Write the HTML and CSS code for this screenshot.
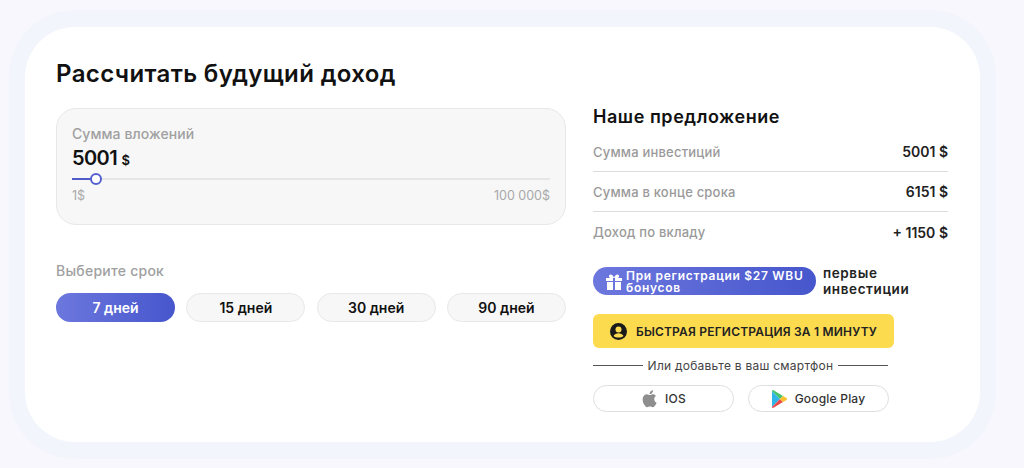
FILE: index.html
```html
<!DOCTYPE html>
<html lang="ru">
  <head>
    <meta charset="UTF-8" />
    <title>Рассчитать будущий доход</title>
    <link rel="stylesheet" href="styles.css">
  </head>
  <body>
    <div class="halo">
      <main class="card">
        <h1>Рассчитать будущий доход</h1>
        <div class="columns">
          <section class="calc">
            <div class="amount-box">
              <div class="amount-label">Сумма вложений</div>
              <div class="amount-value">5001 <span>$</span></div>
              <div class="slider"><div class="slider-fill"></div><div class="slider-knob"></div></div>
              <div class="slider-limits"><span>1$</span><span>100 000$</span></div>
            </div>
            <div class="term-label">Выберите срок</div>
            <div class="terms">
              <button class="term active">7 дней</button>
              <button class="term">15 дней</button>
              <button class="term">30 дней</button>
              <button class="term">90 дней</button>
            </div>
          </section>
          <section class="offer">
            <h2>Наше предложение</h2>
            <div class="row"><span>Сумма инвестиций</span><b>5001 $</b></div>
            <div class="row"><span>Сумма в конце срока</span><b>6151 $</b></div>
            <div class="row last"><span>Доход по вкладу</span><b>+ 1150 $</b></div>
            <div class="bonus">
              <div class="bonus-pill">
                <svg width="18" height="18" viewBox="0 0 18 18"><path fill="#fff" d="M1 5h7v3H1zM10 5h7v3h-7zM2 9h6v8H2zM10 9h6v8h-6zM5.500 1.500c1.500 0 3 1.500 3.500 3.500H5.500C3.500 5 3.500 1.500 5.500 1.500zM12.500 1.500c2 0 2 3.500 0 3.500H9c.5-2 2-3.500 3.500-3.500z"/></svg>
                <span>При регистрации $27 WBU бонусов</span>
              </div>
              <div class="bonus-text">первые инвестиции</div>
            </div>
            <button class="register">
              <svg width="17" height="17" viewBox="0 0 17 17"><circle cx="8.500" cy="8.500" r="8.500" fill="#1a1a1a"/><circle cx="8.500" cy="6.500" r="3" fill="#fddb4f"/><path fill="#fddb4f" d="M3.500 13c1-2 3-2.800 5-2.800s4 .8 5 2.800c-1.300 1-3 1.600-5 1.600s-3.700-.6-5-1.600z"/></svg>
              БЫСТРАЯ РЕГИСТРАЦИЯ ЗА 1 МИНУТУ
            </button>
            <div class="divider"><i></i><span>Или добавьте в ваш смартфон</span><i></i></div>
            <div class="stores">
              <button class="store">
                <svg width="16" height="19" viewBox="0 0 16 19"><path fill="#8e8e8e" d="M13.200 10c0-2 1.600-3 1.700-3.100-1-1.400-2.400-1.600-3-1.600-1.300-.1-2.500.8-3.100.8-.7 0-1.700-.8-2.800-.8C4.500 5.300 3.200 6.100 2.400 7.400.9 10 2 13.900 3.500 16c.7 1 1.600 2.200 2.700 2.200 1.100-.1 1.500-.7 2.800-.7s1.700.7 2.800.7c1.200 0 1.900-1 2.600-2.100.8-1.200 1.200-2.300 1.200-2.400-.1 0-2.400-.9-2.400-3.700zM11.100 3.900c.6-.7 1-1.700.9-2.700-.9 0-1.900.6-2.500 1.300-.5.600-1 1.600-.9 2.600 1 .1 1.900-.5 2.500-1.200z"/></svg>
                IOS
              </button>
              <button class="store">
                <svg width="15" height="18" viewBox="0 0 15 18"><path fill="#2fb5e8" d="M0 1v16l8-8z"/><path fill="#45c46b" d="M0 1l8 8 3-3L1.500.3C.8-.1.200.2 0 1z"/><path fill="#ea4b4b" d="M0 17l8-8 3 3-9.500 5.700c-.7.400-1.300.1-1.500-.7z"/><path fill="#fbc02d" d="M11 6l3.500 2.100c.7.500.7 1.300 0 1.800L11 12 8 9z"/></svg>
                Google Play
              </button>
            </div>
          </section>
        </div>
      </main>
    </div>
  </body>
</html>
```

FILE: styles.css
```css
* {
  box-sizing: border-box;
}
body {
  margin: 0;
  height: 468px;
  overflow: hidden;
  background: #f7f7fd;
  font-family: Inter, "Noto Sans", sans-serif;
  color: #111;
}
button {
  font-family: inherit;
  cursor: pointer;
}
.halo {
  margin: 10px 28px 0 9px;
  height: 449px;
  padding: 17px 16px 17px 16px;
  background: #f2f5fb;
  border-radius: 66px;
}
.card {
  height: 415px;
  padding: 32px 31px 0 31px;
  background: #fff;
  border-radius: 50px;
}
h1 {
  margin: 0;
  font-size: 24px;
  line-height: 30px;
  font-weight: 600;
  letter-spacing: 0.38px;
}
.columns {
  display: flex;
  justify-content: space-between;
  margin-top: 19px;
}
.calc {
  width: 510px;
}
.amount-box {
  height: 117px;
  padding: 16px 15px 0 15px;
  background: #f7f7f8;
  border: 1px solid #e8e8ea;
  border-radius: 20px;
}
.amount-label {
  font-size: 14px;
  line-height: 17px;
  font-weight: 500;
  color: #a0a0a0;
  letter-spacing: 0.08px;
}
.amount-value {
  margin-top: 3px;
  font-size: 20px;
  line-height: 26px;
  font-weight: 600;
  letter-spacing: -0.6px;
}
.amount-value span {
  font-size: 13px;
}
.slider {
  position: relative;
  height: 2px;
  margin-top: 5px;
  background: #e6e6e8;
}
.slider-fill {
  width: 20px;
  height: 2px;
  background: #4f5bc9;
}
.slider-knob {
  position: absolute;
  left: 18px;
  top: -5px;
  width: 12px;
  height: 12px;
  background: #fff;
  border: 2.500px solid #5560d0;
  border-radius: 50%;
}
.slider-limits {
  display: flex;
  justify-content: space-between;
  margin-top: 7px;
  font-size: 12.500px;
  line-height: 17px;
  color: #a8a8a8;
}
.term-label {
  margin-top: 37px;
  font-size: 14px;
  line-height: 17px;
  font-weight: 500;
  color: #a0a0a0;
  letter-spacing: 0.25px;
}
.terms {
  display: flex;
  justify-content: space-between;
  margin-top: 14px;
}
.term {
  width: 119px;
  height: 29px;
  padding: 0;
  font-size: 14px;
  font-weight: 600;
  color: #111;
  background: #f7f7f8;
  border: 1px solid #e8e8ea;
  border-radius: 15px;
}
.term.active {
  color: #fff;
  border: none;
  background: linear-gradient(90deg, #6d78de, #4656cc);
}
.offer {
  width: 356px;
}
h2 {
  margin: 0;
  font-size: 18px;
  line-height: 18px;
  font-weight: 600;
  letter-spacing: 0.55px;
}
.row {
  display: flex;
  justify-content: space-between;
  align-items: center;
  width: 355px;
  height: 40px;
  font-size: 13px;
  border-bottom: 1px solid #dcdcdc;
}
.offer h2 + .row {
  margin-top: 6px;
}
.row span {
  font-weight: 500;
  color: #9a9a9a;
  letter-spacing: 0.2px;
}
.row b {
  font-size: 14px;
  font-weight: 600;
  color: #222;
}
.row.last {
  border-bottom: none;
}
.bonus {
  display: flex;
  align-items: center;
  gap: 7px;
  margin-top: 13px;
}
.bonus-pill {
  display: flex;
  align-items: center;
  gap: 3px;
  width: 223px;
  height: 28px;
  padding: 2px 0 0 12px;
  font-size: 12px;
  line-height: 12px;
  font-weight: 600;
  letter-spacing: 0.7px;
  color: #fff;
  background: linear-gradient(90deg, #6d78de, #4656cc);
  border-radius: 14px;
}
.bonus-pill svg {
  flex: none;
}
.bonus-text {
  width: 110px;
  font-size: 13.500px;
  line-height: 16px;
  font-weight: 600;
  letter-spacing: 0.6px;
  color: #222;
}
.register {
  display: flex;
  align-items: center;
  justify-content: center;
  gap: 9px;
  width: 301px;
  height: 34px;
  margin-top: 17px;
  padding: 0;
  font-size: 12px;
  font-weight: 600;
  letter-spacing: 0.2px;
  color: #222;
  background: #fddb4f;
  border: none;
  border-radius: 6px;
}
.divider {
  display: flex;
  align-items: center;
  gap: 5px;
  width: 295px;
  margin-top: 10px;
  font-size: 12px;
  line-height: 15px;
  letter-spacing: 0.25px;
  color: #444;
}
.divider i {
  flex: 1;
  height: 1px;
  background: #555;
}
.stores {
  display: flex;
  justify-content: space-between;
  width: 296px;
  margin-top: 12px;
}
.store {
  display: flex;
  align-items: center;
  justify-content: center;
  gap: 8px;
  width: 141px;
  height: 27px;
  padding: 0;
  font-size: 12px;
  font-weight: 500;
  letter-spacing: 0.2px;
  color: #333;
  background: #fff;
  border: 1px solid #dedede;
  border-radius: 14px;
}
```
